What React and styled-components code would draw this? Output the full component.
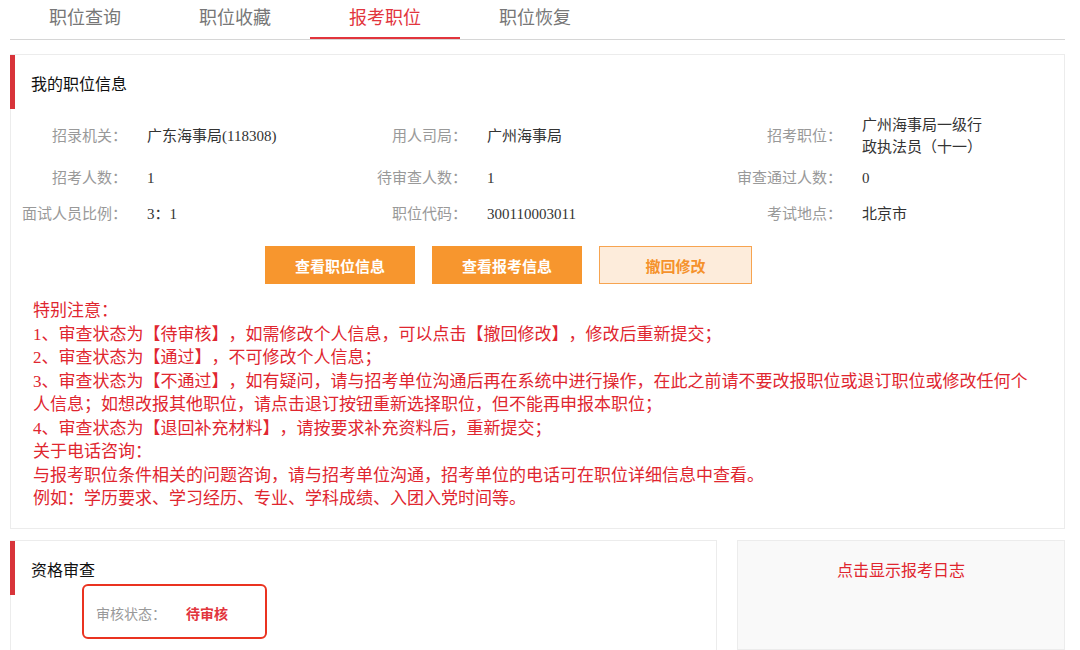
import React from 'react';
import styled, { createGlobalStyle } from 'styled-components';

const GlobalStyle = createGlobalStyle`
  body {
    margin: 0;
    background: #fff;
    font-family: "Liberation Serif", "Noto Sans CJK SC", serif;
    color: #333;
    text-spacing-trim: space-all;
  }
`;

const Page = styled.div`
  width: 1055px;
  padding: 0 15px 0 10px;
`;

const TabBar = styled.div`
  display: flex;
  height: 39px;
  border-bottom: 1px solid #d6d6d6;
`;

const Tab = styled.div`
  width: 150px;
  height: 39px;
  box-sizing: border-box;
  text-align: center;
  line-height: 36px;
  font-size: 18px;
  color: ${({ $active }) => ($active ? '#e2353d' : '#777')};
  border-bottom: 2px solid ${({ $active }) => ($active ? '#e2353d' : 'transparent')};
  margin-bottom: -1px;
`;

const Panel = styled.div`
  margin-top: ${({ $top }) => $top || 0}px;
  border: 1px solid #ececec;
  background: ${({ $grey }) => ($grey ? '#f9f9f9' : '#fff')};
  box-sizing: border-box;
  width: ${({ $width }) => ($width ? `${$width}px` : 'auto')};
`;

const PanelHeader = styled.div`
  height: 54px;
  display: flex;
  align-items: center;
  padding-left: 16px;
  border-left: 5px solid #d8343a;
  margin-left: -1px;
  font-size: 16px;
  color: #111;
  padding-top: 2px;
  box-sizing: border-box;
`;

const InfoGrid = styled.div`
  display: grid;
  grid-template-columns: 116px 224px 116px 259px 116px 1fr;
  margin-top: 3px;
`;

const Cell = styled.div`
  min-height: 36px;
  padding: 2px 0;
  box-sizing: border-box;
  display: flex;
  align-items: center;
  font-size: 15px;
  line-height: 22px;
`;

const Label = styled(Cell)`
  justify-content: flex-end;
  color: #999;
  white-space: nowrap;
`;

const Value = styled(Cell)`
  padding-left: 20px;
  color: #333;
  & > span {
    max-width: ${({ $narrow }) => ($narrow ? '125px' : 'none')};
  }
`;

const ButtonRow = styled.div`
  display: flex;
  gap: 17px;
  padding-left: 254px;
  margin-top: 14px;
`;

const Button = styled.div`
  width: ${({ $ghost }) => ($ghost ? 153 : 150)}px;
  height: 38px;
  box-sizing: border-box;
  display: flex;
  align-items: center;
  justify-content: center;
  font-size: 15px;
  font-weight: bold;
  background: ${({ $ghost }) => ($ghost ? '#fdecdb' : '#f7962e')};
  color: ${({ $ghost }) => ($ghost ? '#f5922c' : '#fff')};
  border: 1px solid ${({ $ghost }) => ($ghost ? '#f7a450' : '#f7962e')};
`;

const Notes = styled.div`
  padding: 15px 25px 17px 22px;
  font-size: 17px;
  line-height: 23.5px;
  color: #e0262f;
`;

const BottomRow = styled.div`
  display: flex;
  gap: 20px;
  margin-top: 11px;
  align-items: flex-start;
`;

const StatusBox = styled.div`
  margin: -11px 0 0 71px;
  width: 185px;
  height: 55px;
  box-sizing: border-box;
  border: 2.5px solid #ea3320;
  border-radius: 6px;
  display: flex;
  align-items: center;
  padding: 4px 0 0 12px;
  font-size: 14px;
  gap: 20px;
`;

const StatusLabel = styled.span`
  color: #999;
`;

const StatusValue = styled.span`
  color: #e2353d;
  font-weight: bold;
`;

const LogLink = styled.div`
  height: 108px;
  box-sizing: border-box;
  padding-top: 16px;
  text-align: center;
  font-size: 16px;
  color: #e0262f;
`;

const tabs = ['职位查询', '职位收藏', '报考职位', '职位恢复'];

const info = [
  ['招录机关：', '广东海事局(118308)', '用人司局：', '广州海事局', '招考职位：', '广州海事局一级行政执法员（十一）'],
  ['招考人数：', '1', '待审查人数：', '1', '审查通过人数：', '0'],
  ['面试人员比例：', '3：1', '职位代码：', '300110003011', '考试地点：', '北京市'],
];

const notes = [
  '特别注意：',
  '1、审查状态为【待审核】，如需修改个人信息，可以点击【撤回修改】，修改后重新提交；',
  '2、审查状态为【通过】，不可修改个人信息；',
  '3、审查状态为【不通过】，如有疑问，请与招考单位沟通后再在系统中进行操作，在此之前请不要改报职位或退订职位或修改任何个人信息；如想改报其他职位，请点击退订按钮重新选择职位，但不能再申报本职位；',
  '4、审查状态为【退回补充材料】，请按要求补充资料后，重新提交；',
  '关于电话咨询：',
  '与报考职位条件相关的问题咨询，请与招考单位沟通，招考单位的电话可在职位详细信息中查看。',
  '例如：学历要求、学习经历、专业、学科成绩、入团入党时间等。',
];

export default function App() {
  return (
    <Page>
      <GlobalStyle />
      <TabBar>
        {tabs.map((t, i) => (
          <Tab key={t} $active={i === 2}>{t}</Tab>
        ))}
      </TabBar>

      <Panel $top={14}>
        <PanelHeader>我的职位信息</PanelHeader>
        <InfoGrid>
          {info.map((row) =>
            row.map((text, i) =>
              i % 2 === 0 ? (
                <Label key={text}>{text}</Label>
              ) : (
                <Value key={`${row[i - 1]}-v`} $narrow={i === 5}>
                  <span>{text}</span>
                </Value>
              )
            )
          )}
        </InfoGrid>
        <ButtonRow>
          <Button>查看职位信息</Button>
          <Button>查看报考信息</Button>
          <Button $ghost>撤回修改</Button>
        </ButtonRow>
        <Notes>
          {notes.map((n) => (
            <div key={n}>{n}</div>
          ))}
        </Notes>
      </Panel>

      <BottomRow>
        <Panel $width={707}>
          <PanelHeader>资格审查</PanelHeader>
          <StatusBox>
            <StatusLabel>审核状态：</StatusLabel>
            <StatusValue>待审核</StatusValue>
          </StatusBox>
          <div style={{ height: 20 }} />
        </Panel>
        <Panel $width={328} $grey>
          <LogLink>点击显示报考日志</LogLink>
        </Panel>
      </BottomRow>
    </Page>
  );
}
